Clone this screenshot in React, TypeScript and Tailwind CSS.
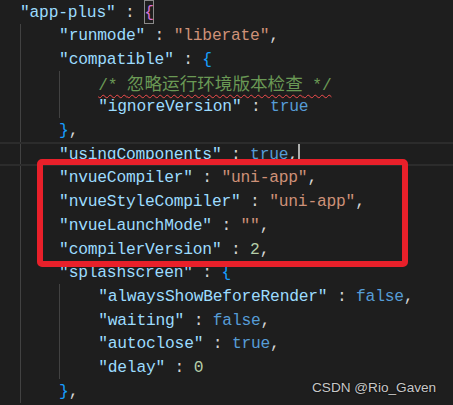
import React from 'react';

type Tok = [string, string];

const P = 'text-[#d4d4d4]';
const KEY = 'text-[#9cdcfe]';
const STR = 'text-[#ce9178]';
const KW = 'text-[#569cd6]';
const NUM = 'text-[#b5cea8]';
const B3 = 'text-[#179fff]';

const kv = (k: string, v: string, cls: string, comma = true): Tok[] => {
  const out: Tok[] = [[`"${k}"`, KEY], [' : ', P], [v, cls]];
  if (comma) out.push([',', P]);
  return out;
};

const Row = ({ level, active, children }: { level: number; active?: boolean; children: React.ReactNode }) => (
  <div
    className={
      'flex h-[23.7px] items-stretch whitespace-pre ' +
      (active ? 'border-y-2 border-[#2c2c2c]' : '')
    }
  >
    <span className="w-[20px] shrink-0" />
    {Array.from({ length: level }).map((_, i) => (
      <span key={i} className="w-[39.1px] shrink-0 border-l border-[#424242]" />
    ))}
    <span className="flex items-center pt-[2px]">{children}</span>
  </div>
);

const Toks = ({ toks }: { toks: Tok[] }) => (
  <>
    {toks.map(([t, c], i) => (
      <span key={i} className={c}>
        {t}
      </span>
    ))}
  </>
);

export default function App() {
  return (
    <div
      className="relative h-[405px] w-[453px] overflow-hidden bg-[#1e1e1e] text-[16.3px] tracking-[-0.22px]"
      style={{ fontFamily: '"Liberation Mono", "Noto Sans CJK SC", monospace' }}
    >
      <Row level={0}>
        <span className={KEY}>"app-plus"</span>
        <span className={P}> : </span>
        <span className="-mt-[2px] inline-flex h-[23.7px] items-center pt-[2px] text-[#da70d6] shadow-[inset_0_0_0_1px_#8a8a8a]">{'{'}</span>
      </Row>
      <Row level={1}>
        <Toks toks={kv('runmode', '"liberate"', STR)} />
      </Row>
      <Row level={1}>
        <Toks toks={kv('compatible', '{', B3, false)} />
      </Row>
      <Row level={2}>
        <span className="text-[#6a9955] underline decoration-[#f14c4c] decoration-wavy decoration-1 underline-offset-[4px]">
          {'/* '}
          <span className="text-[17.6px] tracking-normal" style={{ fontFamily: '"Noto Sans CJK SC", sans-serif' }}>
            忽略运行环境版本检查
          </span>
          {' */'}
        </span>
      </Row>
      <Row level={2}>
        <Toks toks={kv('ignoreVersion', 'true', KW, false)} />
      </Row>
      <Row level={1}>
        <Toks toks={[['}', B3], [',', P]]} />
      </Row>
      <Row level={1} active>
        <Toks toks={kv('usingComponents', 'true', KW)} />
        <span className="-mt-[2px] inline-block h-[20px] w-[2px] bg-[#aeafad]" />
      </Row>

      <div className="relative">
        <Row level={1}>
          <Toks toks={kv('nvueCompiler', '"uni-app"', STR)} />
        </Row>
        <Row level={1}>
          <Toks toks={kv('nvueStyleCompiler', '"uni-app"', STR)} />
        </Row>
        <Row level={1}>
          <Toks toks={kv('nvueLaunchMode', '""', STR)} />
        </Row>
        <Row level={1}>
          <Toks toks={kv('compilerVersion', '2', NUM)} />
        </Row>
        <div className="pointer-events-none absolute left-[37px] top-[-7px] h-[108px] w-[371px] rounded-[5px] border-[6px] border-[#e8202a]" />
      </div>

      <Row level={1}>
        <Toks toks={kv('splashscreen', '{', B3, false)} />
      </Row>
      <Row level={2}>
        <Toks toks={kv('alwaysShowBeforeRender', 'false', KW)} />
      </Row>
      <Row level={2}>
        <Toks toks={kv('waiting', 'false', KW)} />
      </Row>
      <Row level={2}>
        <Toks toks={kv('autoclose', 'true', KW)} />
      </Row>
      <Row level={2}>
        <Toks toks={kv('delay', '0', NUM, false)} />
      </Row>
      <Row level={1}>
        <Toks toks={[['}', B3], [',', P]]} />
      </Row>

      <div
        className="absolute left-[312px] top-[378px] text-[13.6px] leading-[20px] tracking-normal text-[#c8c8c8] [text-shadow:0_0_2px_#000]"
        style={{ fontFamily: '"Liberation Sans", Arial, sans-serif' }}
      >
        CSDN @Rio_Gaven
      </div>
    </div>
  );
}
